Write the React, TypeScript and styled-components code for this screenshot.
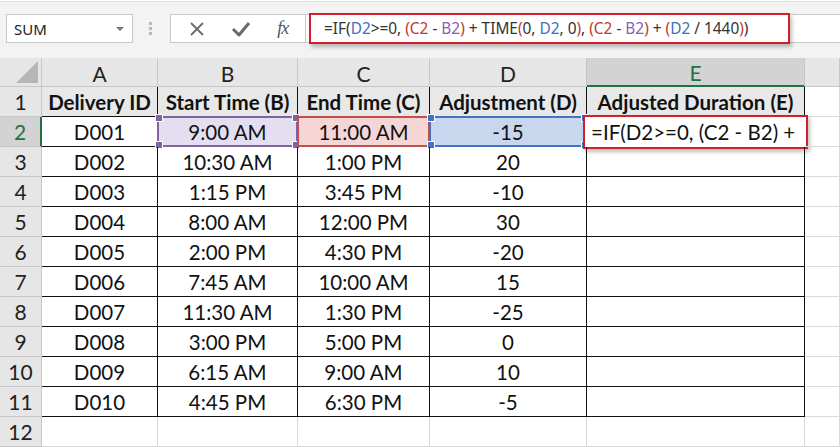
import React from "react";
import styled, { createGlobalStyle, css } from "styled-components";

const GlobalStyle = createGlobalStyle`
  html, body {
    margin: 0;
    padding: 0;
    background: #ffffff;
    overflow: hidden;
  }
`;

type Ref = { text: string; color?: string };

const BLUE = "#3c6fc2";
const RED = "#c0392b";
const PURPLE = "#8a5cb8";

const formula: Ref[] = [
  { text: "=IF(" },
  { text: "D2", color: BLUE },
  { text: ">=0, " },
  { text: "(", color: RED },
  { text: "C2", color: RED },
  { text: " - " },
  { text: "B2", color: PURPLE },
  { text: ")", color: RED },
  { text: " + TIME" },
  { text: "(", color: RED },
  { text: "0, " },
  { text: "D2", color: BLUE },
  { text: ", 0" },
  { text: ")", color: RED },
  { text: ", " },
  { text: "(", color: RED },
  { text: "C2", color: RED },
  { text: " - " },
  { text: "B2", color: PURPLE },
  { text: ")", color: RED },
  { text: " + " },
  { text: "(", color: RED },
  { text: "D2", color: BLUE },
  { text: " / 1440" },
  { text: ")", color: RED },
  { text: ")" },
];

const headers = ["Delivery ID", "Start Time (B)", "End Time (C)", "Adjustment (D)", "Adjusted Duration (E)"];

const rows = [
  ["D001", "9:00 AM", "11:00 AM", "-15"],
  ["D002", "10:30 AM", "1:00 PM", "20"],
  ["D003", "1:15 PM", "3:45 PM", "-10"],
  ["D004", "8:00 AM", "12:00 PM", "30"],
  ["D005", "2:00 PM", "4:30 PM", "-20"],
  ["D006", "7:45 AM", "10:00 AM", "15"],
  ["D007", "11:30 AM", "1:30 PM", "-25"],
  ["D008", "3:00 PM", "5:00 PM", "0"],
  ["D009", "6:15 AM", "9:00 AM", "10"],
  ["D010", "4:45 PM", "6:30 PM", "-5"],
];

const Page = styled.div`
  width: 840px;
  height: 447px;
  display: flex;
  flex-direction: column;
  background: #ffffff;
  font-family: Lato, "Open Sans", sans-serif;
`;

const Toolbar = styled.div`
  height: 57px;
  box-sizing: border-box;
  background: #f3f3f3;
  border-top: 1px solid #e2e2e2;
  margin-top: 1px;
  display: flex;
  align-items: flex-start;
  padding: 12px 0 0 6px;
`;

const NameBox = styled.div`
  width: 127px;
  height: 29px;
  box-sizing: border-box;
  background: #ffffff;
  border: 1px solid #c8c8c8;
  display: flex;
  align-items: center;
  justify-content: space-between;
  padding: 0 8px 0 7px;
  font-family: "Noto Sans", "Open Sans", sans-serif;
  font-size: 15px;
  color: #222;
`;

const Caret = styled.span`
  width: 0;
  height: 0;
  border-left: 4px solid transparent;
  border-right: 4px solid transparent;
  border-top: 4px solid #777;
`;

const Grip = styled.div`
  width: 25px;
  height: 29px;
  display: flex;
  flex-direction: column;
  align-items: center;
  justify-content: center;
  gap: 2px;
  margin: 0 7px 0 5px;
  & > span {
    width: 3px;
    height: 3px;
    background: #b8b8b8;
  }
`;

const FuncBox = styled.div`
  width: 136px;
  height: 29px;
  box-sizing: border-box;
  background: #ffffff;
  border: 1px solid #c8c8c8;
  display: flex;
  align-items: center;
  justify-content: space-around;
  padding: 0 4px;
`;

const Fx = styled.span`
  font-family: "Liberation Serif", serif;
  font-style: italic;
  font-size: 18px;
  color: #555;
  letter-spacing: -1px;
`;

const FormulaInput = styled.div`
  flex: 1;
  height: 29px;
  box-sizing: border-box;
  background: #ffffff;
  border-top: 1px solid #c8c8c8;
  border-bottom: 1px solid #c8c8c8;
  display: flex;
  align-items: center;
`;

const FormulaMark = styled.div`
  margin-left: 3px;
  width: 481px;
  height: 31px;
  box-sizing: border-box;
  border: 2.5px solid #d41f2a;
  box-shadow: 2px 3px 4px rgba(0, 0, 0, 0.25);
  display: flex;
  align-items: center;
  padding-left: 13px;
  font-family: "Noto Sans", "Open Sans", sans-serif;
  font-size: 15.4px;
  color: #333;
  white-space: pre;
`;

const Sheet = styled.div`
  flex: 1;
  display: grid;
  grid-template-columns: 42px 116px 140px 132px 157px 218px 1fr;
  grid-template-rows: 29px repeat(12, 30px);
  align-content: start;
`;

const Corner = styled.div`
  background: #e6e6e6;
  border-right: 1px solid #c6c6c6;
  border-bottom: 1px solid #c6c6c6;
  box-sizing: border-box;
  position: relative;
  &::after {
    content: "";
    position: absolute;
    right: 3px;
    bottom: 3px;
    width: 0;
    height: 0;
    border-left: 22px solid transparent;
    border-bottom: 22px solid #b6b6b6;
  }
`;

const ColHead = styled.div<{ $active?: boolean }>`
  box-sizing: border-box;
  background: ${(p) => (p.$active ? "#d3d3d3" : "#e6e6e6")};
  border-right: 1px solid #c6c6c6;
  border-bottom: ${(p) => (p.$active ? "2px solid #217346" : "1px solid #c6c6c6")};
  color: ${(p) => (p.$active ? "#217346" : "#222")};
  display: flex;
  align-items: center;
  justify-content: center;
  font-size: 21px;
  padding-top: 2px;
`;

const RowHead = styled.div<{ $active?: boolean }>`
  box-sizing: border-box;
  background: ${(p) => (p.$active ? "#d3d3d3" : "#e6e6e6")};
  border-right: ${(p) => (p.$active ? "2px solid #217346" : "1px solid #c6c6c6")};
  border-bottom: 1px solid #c6c6c6;
  color: ${(p) => (p.$active ? "#217346" : "#222")};
  display: flex;
  align-items: center;
  justify-content: center;
  font-size: 21px;
`;

const Cell = styled.div<{ $inTable?: boolean; $head?: boolean; $left?: boolean }>`
  box-sizing: border-box;
  position: relative;
  display: flex;
  align-items: center;
  justify-content: ${(p) => (p.$left ? "flex-start" : "center")};
  font-size: 20.5px;
  color: #111;
  white-space: nowrap;
  ${(p) =>
    p.$inTable
      ? css`
          border-right: 1px solid #111;
          border-bottom: 1px solid #111;
        `
      : css`
          border-right: 1px solid #d9d9d9;
          border-bottom: 1px solid #d9d9d9;
        `}
  ${(p) =>
    p.$head &&
    css`
      background: #e8e8e8;
      font-weight: 700;
    `}
`;

const Range = styled.div<{ $line: string; $fill: string }>`
  position: absolute;
  left: -1px;
  top: -1px;
  right: -1px;
  bottom: -1px;
  border: 2px solid ${(p) => p.$line};
  background: ${(p) => p.$fill};
  z-index: 0;
`;

const Handle = styled.span<{ $color: string; $x: "l" | "r"; $y: "t" | "b" }>`
  position: absolute;
  width: 6px;
  height: 6px;
  background: ${(p) => p.$color};
  border: 1px solid #ffffff;
  ${(p) => (p.$x === "l" ? "left: -4px;" : "right: -4px;")}
  ${(p) => (p.$y === "t" ? "top: -4px;" : "bottom: -4px;")}
  z-index: 2;
`;

const CellText = styled.span`
  position: relative;
  z-index: 1;
`;

const EditText = styled.span`
  position: relative;
  z-index: 1;
  padding-left: 4px;
`;

const EditMark = styled.div`
  position: absolute;
  left: -4px;
  top: -2px;
  right: -4px;
  bottom: -3px;
  border: 2.5px solid #d41f2a;
  box-shadow: 2px 3px 4px rgba(0, 0, 0, 0.25);
  background: #ffffff;
  z-index: 0;
`;

const ranges: Record<number, { line: string; fill: string; handles: boolean }> = {
  1: { line: "#8064a2", fill: "#e4dff0", handles: true },
  2: { line: "#c0504d", fill: "#f6d5d5", handles: false },
  3: { line: "#4472c4", fill: "#c9d7ee", handles: true },
};

const CancelIcon = () => (
  <svg width="18" height="18" viewBox="0 0 18 18">
    <path d="M3 3 L15 15 M15 3 L3 15" stroke="#6a6a6a" strokeWidth="1.8" fill="none" />
  </svg>
);

const CheckIcon = () => (
  <svg width="20" height="18" viewBox="0 0 20 18">
    <path d="M2 9 L8 15 L18 3" stroke="#6a6a6a" strokeWidth="3" fill="none" strokeLinejoin="round" />
  </svg>
);

const App = (): JSX.Element => (
  <Page>
    <GlobalStyle />
    <Toolbar>
      <NameBox>
        <span>SUM</span>
        <Caret />
      </NameBox>
      <Grip>
        <span />
        <span />
        <span />
      </Grip>
      <FuncBox>
        <CancelIcon />
        <CheckIcon />
        <Fx>fx</Fx>
      </FuncBox>
      <FormulaInput>
        <FormulaMark>
          {formula.map((part, i) => (
            <span key={i} style={part.color ? { color: part.color } : undefined}>
              {part.text}
            </span>
          ))}
        </FormulaMark>
      </FormulaInput>
    </Toolbar>
    <Sheet>
      <Corner />
      {["A", "B", "C", "D", "E", ""].map((c, i) => (
        <ColHead key={i} $active={c === "E"}>
          {c}
        </ColHead>
      ))}

      <RowHead>1</RowHead>
      {headers.map((h) => (
        <Cell key={h} $inTable $head>
          <CellText>{h}</CellText>
        </Cell>
      ))}
      <Cell />

      {rows.map((r, ri) => {
        const rowNo = ri + 2;
        return (
          <React.Fragment key={rowNo}>
            <RowHead $active={rowNo === 2}>{rowNo}</RowHead>
            {r.map((v, ci) => {
              const rg = rowNo === 2 ? ranges[ci] : undefined;
              return (
                <Cell key={ci} $inTable>
                  {rg && (
                    <Range $line={rg.line} $fill={rg.fill}>
                      {rg.handles && (
                        <>
                          <Handle $color={rg.line} $x="l" $y="t" />
                          <Handle $color={rg.line} $x="r" $y="t" />
                          <Handle $color={rg.line} $x="l" $y="b" />
                          <Handle $color={rg.line} $x="r" $y="b" />
                        </>
                      )}
                    </Range>
                  )}
                  <CellText>{v}</CellText>
                </Cell>
              );
            })}
            <Cell $inTable $left>
              {rowNo === 2 && (
                <>
                  <EditMark />
                  <EditText>=IF(D2&gt;=0, (C2 - B2) +</EditText>
                </>
              )}
            </Cell>
            <Cell />
          </React.Fragment>
        );
      })}

      <RowHead>12</RowHead>
      {[0, 1, 2, 3, 4, 5].map((i) => (
        <Cell key={i} />
      ))}
    </Sheet>
  </Page>
);

export default App;
